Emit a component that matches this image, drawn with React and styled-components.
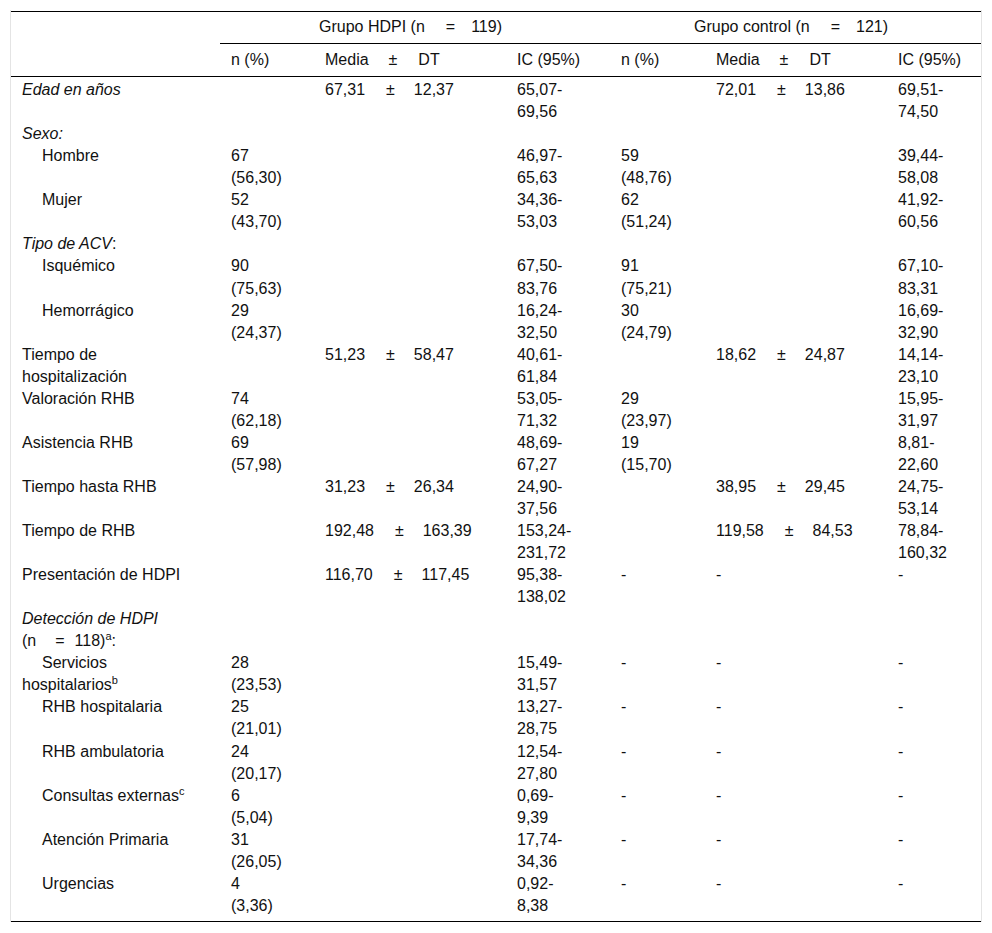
import React from 'react';
import styled, { createGlobalStyle } from 'styled-components';

const GlobalStyle = createGlobalStyle`
  body {
    margin: 0;
    background: #fff;
    color: #111;
    font-family: 'Liberation Sans', Arial, sans-serif;
  }
`;

const Frame = styled.div`
  margin: 10px 10px 0;
  padding-top: 1px;
  border-left: 1px solid #e4e4e4;
  border-right: 1px solid #e4e4e4;
`;

const Table = styled.table`
  width: 100%;
  table-layout: fixed;
  border-collapse: collapse;
  border-spacing: 0;
  border-top: 1px solid #000;
  border-bottom: 1px solid #000;
  font-size: 16px;
  line-height: 22.05px;
`;

const Th = styled.th`
  padding: 5px 20px 5px 11px;
  font-weight: normal;
  text-align: ${(p) => (p.$center ? 'center' : 'left')};
  vertical-align: top;
  border-bottom: ${(p) => (p.$rule ? '1px solid #000' : '0')};
  white-space: nowrap;
`;

const HeadRow = styled.tr`
  &:first-child th {
    padding-top: 4px;
  }
`;

const Row = styled.tr`
  &:first-child td {
    padding-top: 2px;
  }
  &:last-child td {
    padding-bottom: 4px;
  }
`;

const Td = styled.td`
  padding: 0 20px 0 11px;
  vertical-align: top;
  white-space: nowrap;
`;

const Label = styled.td`
  padding: 0 26px 0 11px;
  vertical-align: top;
  font-style: ${(p) => (p.$italic ? 'italic' : 'normal')};
  text-indent: ${(p) => (p.$sub ? '20px' : '0')};
`;

const Upright = styled.span`
  font-style: normal;
`;

const Pm = styled.span`
  padding: 0 ${(p) => (p.$head ? '21px' : '19px')} 0 ${(p) => (p.$head ? '20px' : '21px')};
`;

const Eq = styled.span`
  padding: ${(p) => (p.$tight ? '0 10px 0 19px' : '0 16px 0 21px')};
`;

const Sup = styled.sup`
  font-size: 11px;
  line-height: 0;
  vertical-align: super;
`;

const NPct = ({ v }) => {
  if (!v) return null;
  if (v === '-') return '-';
  return (
    <>
      {v[0]}
      <br />({v[1]})
    </>
  );
};

const Mean = ({ v }) => {
  if (!v) return null;
  if (v === '-') return '-';
  return (
    <>
      {v[0]}
      <Pm>±</Pm>
      {v[1]}
    </>
  );
};

const Range = ({ v }) => {
  if (!v) return null;
  if (v === '-') return '-';
  return (
    <>
      {v[0]}-
      <br />
      {v[1]}
    </>
  );
};

const DASH = { n: '-', m: '-', ci: '-' };

const rows = [
  {
    label: 'Edad en años',
    italic: true,
    h: { m: ['67,31', '12,37'], ci: ['65,07', '69,56'] },
    c: { m: ['72,01', '13,86'], ci: ['69,51', '74,50'] },
  },
  { label: 'Sexo:', italic: true },
  {
    label: 'Hombre',
    sub: true,
    h: { n: ['67', '56,30'], ci: ['46,97', '65,63'] },
    c: { n: ['59', '48,76'], ci: ['39,44', '58,08'] },
  },
  {
    label: 'Mujer',
    sub: true,
    h: { n: ['52', '43,70'], ci: ['34,36', '53,03'] },
    c: { n: ['62', '51,24'], ci: ['41,92', '60,56'] },
  },
  {
    label: (
      <>
        Tipo de ACV<Upright>:</Upright>
      </>
    ),
    italic: true,
  },
  {
    label: 'Isquémico',
    sub: true,
    h: { n: ['90', '75,63'], ci: ['67,50', '83,76'] },
    c: { n: ['91', '75,21'], ci: ['67,10', '83,31'] },
  },
  {
    label: 'Hemorrágico',
    sub: true,
    h: { n: ['29', '24,37'], ci: ['16,24', '32,50'] },
    c: { n: ['30', '24,79'], ci: ['16,69', '32,90'] },
  },
  {
    label: 'Tiempo de hospitalización',
    h: { m: ['51,23', '58,47'], ci: ['40,61', '61,84'] },
    c: { m: ['18,62', '24,87'], ci: ['14,14', '23,10'] },
  },
  {
    label: 'Valoración RHB',
    h: { n: ['74', '62,18'], ci: ['53,05', '71,32'] },
    c: { n: ['29', '23,97'], ci: ['15,95', '31,97'] },
  },
  {
    label: 'Asistencia RHB',
    h: { n: ['69', '57,98'], ci: ['48,69', '67,27'] },
    c: { n: ['19', '15,70'], ci: ['8,81', '22,60'] },
  },
  {
    label: 'Tiempo hasta RHB',
    h: { m: ['31,23', '26,34'], ci: ['24,90', '37,56'] },
    c: { m: ['38,95', '29,45'], ci: ['24,75', '53,14'] },
  },
  {
    label: 'Tiempo de RHB',
    h: { m: ['192,48', '163,39'], ci: ['153,24', '231,72'] },
    c: { m: ['119,58', '84,53'], ci: ['78,84', '160,32'] },
  },
  {
    label: 'Presentación de HDPI',
    h: { m: ['116,70', '117,45'], ci: ['95,38', '138,02'] },
    c: DASH,
  },
  {
    label: (
      <>
        Detección de HDPI{' '}
        <Upright>
          (n<Eq $tight>=</Eq>118)<Sup>a</Sup>:
        </Upright>
      </>
    ),
    italic: true,
  },
  {
    label: (
      <>
        Servicios hospitalarios<Sup>b</Sup>
      </>
    ),
    sub: true,
    h: { n: ['28', '23,53'], ci: ['15,49', '31,57'] },
    c: DASH,
  },
  {
    label: 'RHB hospitalaria',
    sub: true,
    h: { n: ['25', '21,01'], ci: ['13,27', '28,75'] },
    c: DASH,
  },
  {
    label: 'RHB ambulatoria',
    sub: true,
    h: { n: ['24', '20,17'], ci: ['12,54', '27,80'] },
    c: DASH,
  },
  {
    label: (
      <>
        Consultas externas<Sup>c</Sup>
      </>
    ),
    sub: true,
    h: { n: ['6', '5,04'], ci: ['0,69', '9,39'] },
    c: DASH,
  },
  {
    label: 'Atención Primaria',
    sub: true,
    h: { n: ['31', '26,05'], ci: ['17,74', '34,36'] },
    c: DASH,
  },
  {
    label: 'Urgencias',
    sub: true,
    h: { n: ['4', '3,36'], ci: ['0,92', '8,38'] },
    c: DASH,
  },
];

const widths = [209, 94, 192, 104, 95, 182, 94];

const GroupCells = ({ g = {} }) => (
  <>
    <Td>
      <NPct v={g.n} />
    </Td>
    <Td>
      <Mean v={g.m} />
    </Td>
    <Td>
      <Range v={g.ci} />
    </Td>
  </>
);

const SubHead = () => (
  <>
    <Th $rule>n (%)</Th>
    <Th $rule>
      Media<Pm $head>±</Pm>DT
    </Th>
    <Th $rule>IC (95%)</Th>
  </>
);

const App = () => {
  return (
    <>
      <GlobalStyle />
      <Frame>
        <Table>
          <colgroup>
            {widths.map((w, i) => (
              <col key={i} style={{ width: w }} />
            ))}
          </colgroup>
          <thead>
            <HeadRow>
              <Th rowSpan={2} $rule />
              <Th $center $rule colSpan={3}>
                Grupo HDPI (n<Eq>=</Eq>119)
              </Th>
              <Th $center $rule colSpan={3}>
                Grupo control (n<Eq>=</Eq>121)
              </Th>
            </HeadRow>
            <HeadRow>
              <SubHead />
              <SubHead />
            </HeadRow>
          </thead>
          <tbody>
            {rows.map((r, i) => (
              <Row key={i}>
                <Label $italic={r.italic} $sub={r.sub}>
                  {r.label}
                </Label>
                <GroupCells g={r.h} />
                <GroupCells g={r.c} />
              </Row>
            ))}
          </tbody>
        </Table>
      </Frame>
    </>
  );
};

export default App;
